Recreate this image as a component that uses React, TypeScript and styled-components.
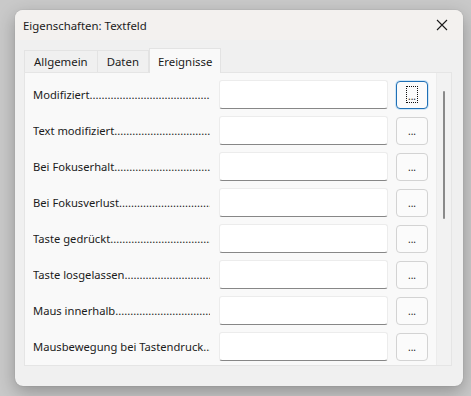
import React from 'react';
import styled, { createGlobalStyle } from 'styled-components';

const GlobalStyle = createGlobalStyle`
  html, body {
    margin: 0;
    padding: 0;
    background: #c9c9c9;
    font-family: "Noto Sans", "Liberation Sans", sans-serif;
    font-size: 11.2px;
    color: #1b1b1b;
  }
  #root {
    width: 471px;
    height: 396px;
    padding: 10px 8px 10px 15px;
    box-sizing: border-box;
  }
`;

const events = [
  'Modifiziert',
  'Text modifiziert',
  'Bei Fokuserhalt',
  'Bei Fokusverlust',
  'Taste gedrückt',
  'Taste losgelassen',
  'Maus innerhalb',
  'Mausbewegung bei Tastendruck',
];

const tabs = ['Allgemein', 'Daten', 'Ereignisse'];
const DOTS = '.'.repeat(80);

const App: React.FC = () => {
  return (
    <>
      <GlobalStyle />
      <Window>
        <TitleBar>
          <Title>Eigenschaften: Textfeld</Title>
          <CloseButton>
            <svg width="12" height="12" viewBox="0 0 12 12">
              <path d="M1 1 L11 11 M11 1 L1 11" stroke="#1b1b1b" strokeWidth="1.1" fill="none" />
            </svg>
          </CloseButton>
        </TitleBar>
        <Body>
          <TabStrip>
            {tabs.map((t, i) => (
              <Tab key={t} active={i === 2}>{t}</Tab>
            ))}
          </TabStrip>
          <Panel>
            <List>
              {events.map((e, i) => (
                <Row key={e}>
                  <Label>{e}{DOTS}</Label>
                  <Field />
                  <DotsButton focused={i === 0}>
                    {i === 0 ? <FocusRing>...</FocusRing> : '...'}
                  </DotsButton>
                </Row>
              ))}
            </List>
            <ScrollTrack>
              <Thumb />
            </ScrollTrack>
          </Panel>
        </Body>
      </Window>
    </>
  );
};

const Window = styled.div`
  width: 448px;
  height: 376px;
  background: #f0f0f0;
  border-radius: 8px;
  box-shadow: 0 6px 18px rgba(0, 0, 0, 0.28), 0 0 1px rgba(0, 0, 0, 0.3);
  overflow: hidden;
  display: flex;
  flex-direction: column;
`;

const TitleBar = styled.div`
  height: 30px;
  display: flex;
  align-items: center;
  justify-content: space-between;
  padding: 0 9px 0 8px;
  background: #f3f1ef;
`;

const Title = styled.span`
  font-size: 11.4px;
`;

const CloseButton = styled.div`
  width: 24px;
  height: 24px;
  display: flex;
  align-items: center;
  justify-content: center;
`;

const Body = styled.div`
  padding: 8px 11px 0 9px;
  display: flex;
  flex-direction: column;
`;

const TabStrip = styled.div`
  display: flex;
  align-items: flex-end;
  height: 24px;
`;

const Tab = styled.div<{ active?: boolean }>`
  height: ${({ active }) => (active ? '25px' : '22px')};
  padding: 0 ${({ active }) => (active ? '8px' : '9px')};
  display: flex;
  align-items: center;
  box-sizing: border-box;
  border: 1px solid #e3e3e3;
  border-bottom: none;
  border-left-width: ${({ active }) => (active ? '1px' : '0')};
  &:first-child {
    border-left-width: 1px;
  }
  background: ${({ active }) => (active ? '#f9f9f9' : '#f0f0f0')};
  margin-bottom: ${({ active }) => (active ? '-1px' : '0')};
  position: relative;
  z-index: ${({ active }) => (active ? 1 : 0)};
  font-size: 11.4px;
`;

const Panel = styled.div`
  height: 294px;
  box-sizing: border-box;
  background: #f9f9f9;
  border: 1px solid #e5e5e5;
  display: flex;
`;

const List = styled.div`
  flex: 1;
  padding: 7px 0 0 8px;
  display: flex;
  flex-direction: column;
  gap: 7px;
`;

const Row = styled.div`
  display: grid;
  grid-template-columns: 178px 169px 32px;
  column-gap: 8px;
  align-items: center;
  height: 29px;
`;

const Label = styled.div`
  width: 177px;
  white-space: nowrap;
  overflow: hidden;
  font-size: 11.2px;
`;

const Field = styled.div`
  height: 29px;
  box-sizing: border-box;
  background: #ffffff;
  border: 1px solid #ececec;
  border-bottom: 1px solid #878787;
  border-radius: 3px;
`;

const DotsButton = styled.div<{ focused?: boolean }>`
  height: 28px;
  box-sizing: border-box;
  border: 1px solid ${({ focused }) => (focused ? '#1f6fb5' : '#d3d3d3')};
  box-shadow: ${({ focused }) => (focused ? '0 0 0 1px #cfe6f7' : 'none')};
  border-radius: 4px;
  background: #fbfbfb;
  display: flex;
  align-items: center;
  justify-content: center;
  font-size: 10px;
  line-height: 1;
`;

const FocusRing = styled.span`
  width: 12px;
  height: 17px;
  box-sizing: border-box;
  border: 1px dotted #111;
  display: flex;
  align-items: flex-end;
  justify-content: center;
  font-size: 10px;
  line-height: 11px;
`;

const ScrollTrack = styled.div`
  width: 15px;
  background: #f2f2f2;
  border-left: 1px solid #ececec;
  display: flex;
  justify-content: center;
  padding-top: 18px;
  box-sizing: border-box;
`;

const Thumb = styled.div`
  width: 2px;
  height: 128px;
  background: #8a8a8a;
  border-radius: 1px;
`;

export default App;
